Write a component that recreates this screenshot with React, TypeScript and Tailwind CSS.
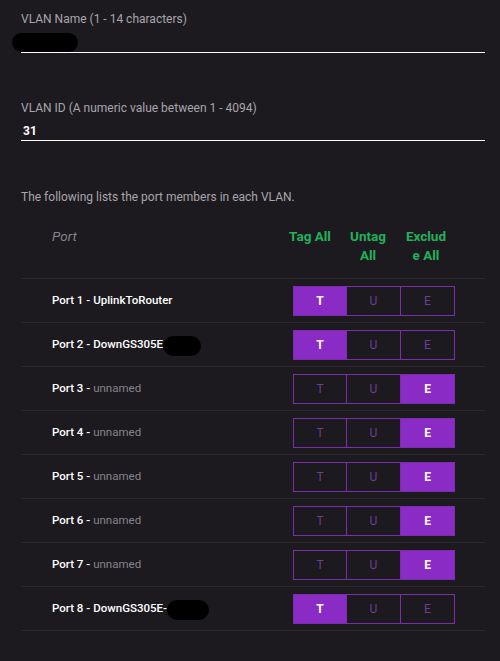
import React from "react";

type Mode = "T" | "U" | "E";
const ports: { n: number; name: string; mode: Mode; blob?: number }[] = [
  { n: 1, name: "UplinkToRouter", mode: "T" },
  { n: 2, name: "DownGS305E", mode: "T", blob: 38 },
  { n: 3, name: "", mode: "E" },
  { n: 4, name: "", mode: "E" },
  { n: 5, name: "", mode: "E" },
  { n: 6, name: "", mode: "E" },
  { n: 7, name: "", mode: "E" },
  { n: 8, name: "DownGS305E-", mode: "T", blob: 42 },
];

function Btn({ l, active, first }: { l: Mode; active: boolean; first: boolean }) {
  return (
    <div
      className={
        "w-[54px] h-[30px] flex items-center justify-center text-[12px] border-y border-r border-[#7a2eaa] " +
        (first ? "border-l " : "") +
        (active ? "bg-[#8a2bc6] text-white font-bold" : "text-[#6e3d92]")
      }
    >
      {l}
    </div>
  );
}

export default function App() {
  return (
    <div
      className="min-h-[661px] bg-[#1c1a1f] pl-[21px] pr-[15px] pt-[11px]"
      style={{ fontFamily: "Roboto, 'Liberation Sans', sans-serif" }}
    >
      <div className="text-[12px] leading-[16px] text-[#a7a6ab]">VLAN Name (1 - 14 characters)</div>
      <div className="relative h-[26px] border-b border-white">
        <div className="absolute left-[-9px] top-[6px] w-[66px] h-[19px] rounded-full bg-black" />
      </div>

      <div className="mt-[47px] text-[12px] leading-[16px] text-[#a7a6ab]">
        VLAN ID (A numeric value between 1 - 4094)
      </div>
      <div className="h-[25px] border-b border-white flex items-center pt-[5px] pl-[2px] text-[12px] font-bold text-white">
        31
      </div>

      <div className="mt-[48px] text-[12px] leading-[16px] text-[#a7a6ab]">
        The following lists the port members in each VLAN.
      </div>

      <div className="mt-[10px]">
        <div className="flex items-start pt-[12px] pb-[13px] border-b border-[#2a282e] pr-[30px]">
          <div className="flex-1 pl-[31px] text-[13.5px] leading-[19px] italic text-[#848388]">Port</div>
          {["Tag All", "Untag All", "Exclude All"].map((h) => (
            <div key={h} className="w-[58px] px-[7px] text-center">
              <div className="text-[13.5px] leading-[19px] font-bold text-[#21b15b] break-words">{h}</div>
            </div>
          ))}
        </div>
        {ports.map((p) => (
          <div key={p.n} className="h-[44px] flex items-center border-b border-[#2a282e] pr-[30px]">
            <div className="flex-1 pl-[31px] text-[11.5px] flex items-center">
              <span className="font-medium text-white">Port {p.n} -</span>
              {p.name ? (
                <span className="font-medium text-white ml-[3px]">{p.name}</span>
              ) : (
                <span className="text-[#858489] ml-[3px]">unnamed</span>
              )}
              {p.blob ? (
                <span
                  className="inline-block h-[20px] rounded-full bg-black mt-[2px]"
                  style={{ width: p.blob }}
                />
              ) : null}
            </div>
            <div className="flex">
              {(["T", "U", "E"] as Mode[]).map((l, i) => (
                <Btn key={l} l={l} active={p.mode === l} first={i === 0} />
              ))}
            </div>
          </div>
        ))}
      </div>
    </div>
  );
}
